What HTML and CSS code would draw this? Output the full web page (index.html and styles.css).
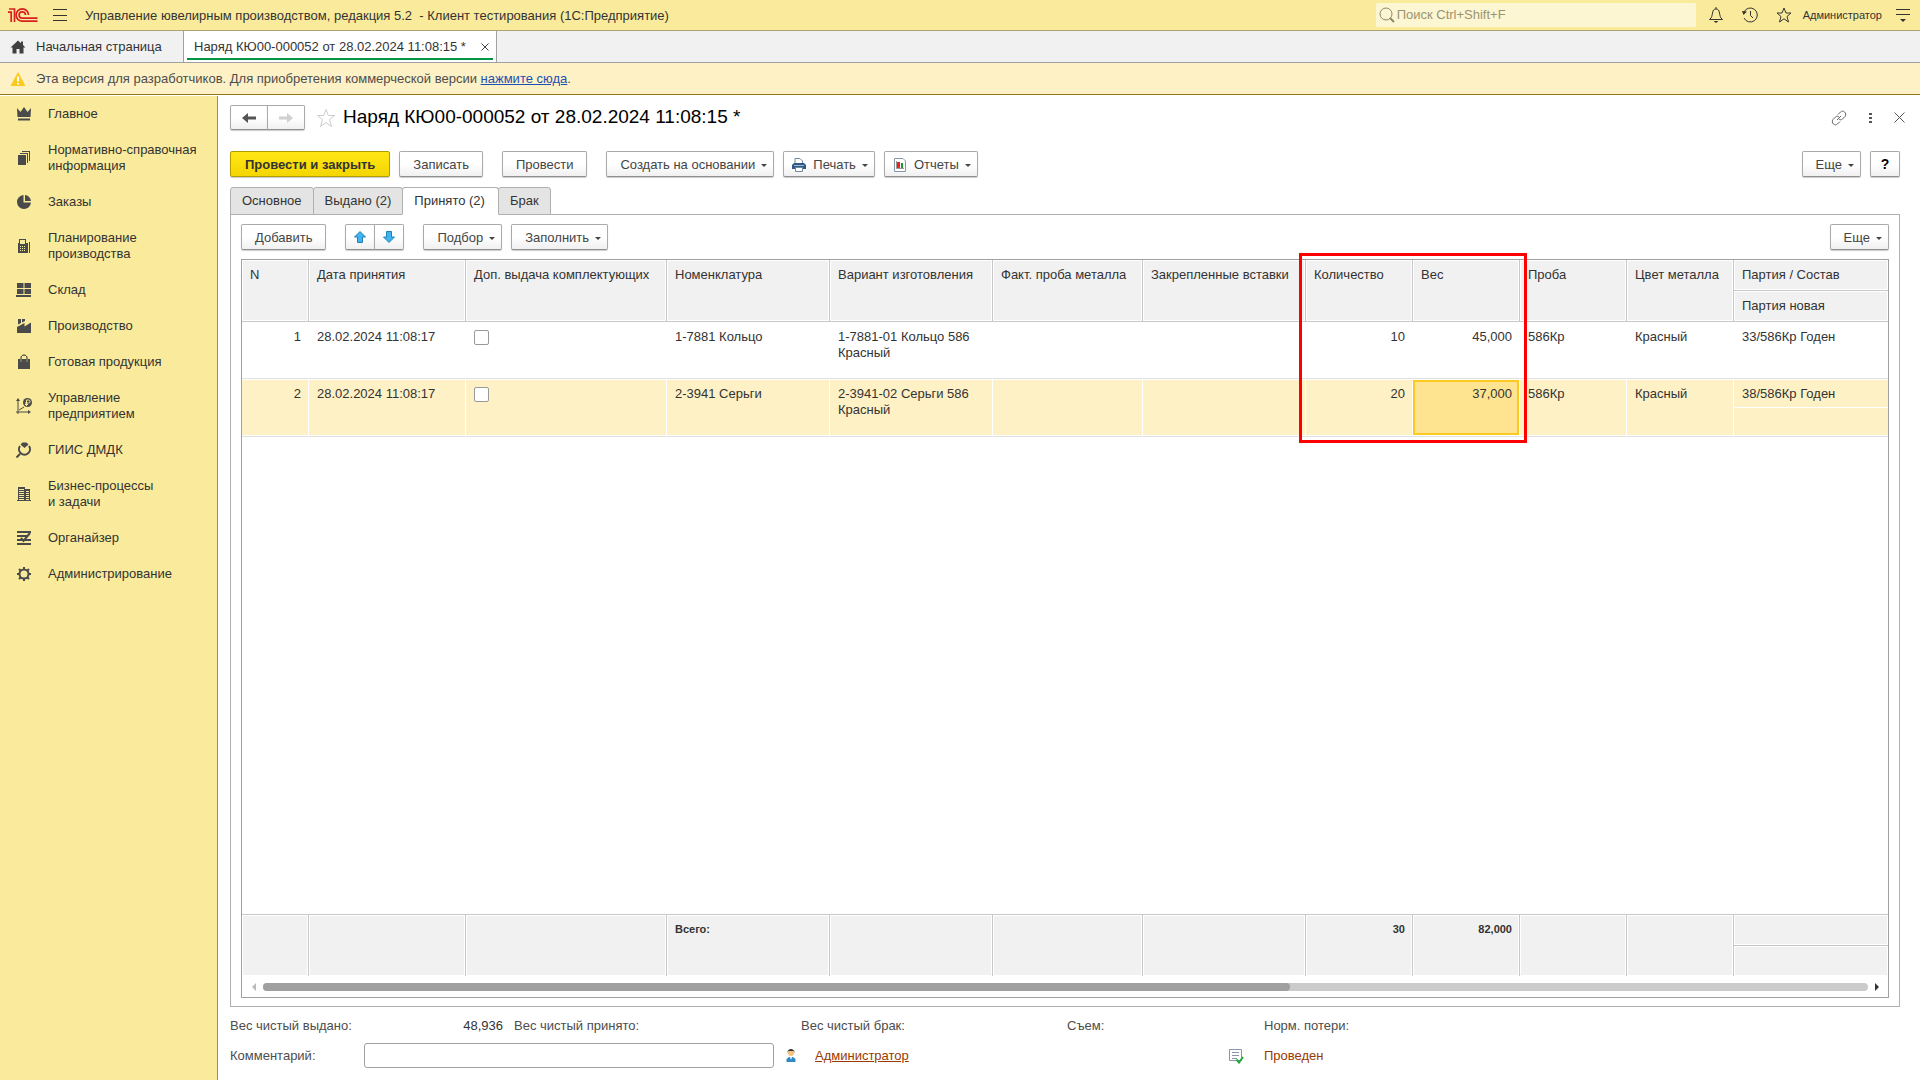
FILE: index.html
```html
<!DOCTYPE html>
<html lang="ru">
<head>
<meta charset="utf-8">
<title>Наряд КЮ00-000052 - Управление ювелирным производством</title>
<link rel="stylesheet" href="styles.css">
</head>
<body>
<header class="topbar">
  <svg class="logo" width="30" height="16" viewBox="0 0 30 16" fill="none" stroke="#d9201f" stroke-width="1.700"><path d="M0 5.200H3.200V15M1 2H6.500V15"/><path d="M20.500 8A6.200 6.200 0 1 0 14.300 14.200H29.500M17.500 8A3.200 3.200 0 1 0 14.300 11.200H29.500"/></svg>
  <button class="icon-btn menu-btn" aria-label="Меню"><svg width="14" height="14" viewBox="0 0 14 14" stroke="#333" stroke-width="1"><path d="M0 1.500H14M0 7.500H14M0 12.500H14"/></svg></button>
  <span class="app-title">Управление ювелирным производством, редакция 5.2 &nbsp;- Клиент тестирования&nbsp;(1С:Предприятие)</span>
  <label class="search">
    <svg width="16" height="16" viewBox="0 0 16 16" fill="none" stroke="#8f8868"><circle cx="7" cy="7" r="6"/><path d="M11 11L15 15" stroke-width="2"/></svg>
    <input type="text" placeholder="Поиск Ctrl+Shift+F" aria-label="Поиск">
  </label>
  <div class="top-icons">
    <button class="icon-btn" aria-label="Уведомления"><svg width="16" height="18" viewBox="0 0 16 18" fill="none" stroke="#333"><path d="M8 1V3M1.500 13.500H14.500C12 11.500 12 9.500 11.500 7C11 4 10 3 8 3S5 4 4.500 7C4 9.500 4 11.500 1.500 13.500Z"/><path d="M5.500 15H10.500L8 17Z" fill="#333" stroke="none"/></svg></button>
    <button class="icon-btn" aria-label="История"><svg width="16" height="16" viewBox="0 0 16 16" fill="none" stroke="#333"><path d="M2 5A7 7 0 1 1 2 11M8.500 4V8.500L11 11"/><path d="M0 4L5 4.500L1.500 8Z" fill="#333" stroke="none"/></svg></button>
    <button class="icon-btn" aria-label="Избранное"><svg width="16" height="16" viewBox="0 0 16 16" fill="none" stroke="#333"><path d="M8 1L10 6H15L11 9.500L12.500 15L8 11.800L3.500 15L5 9.500L1 6H6Z"/></svg></button>
    <span class="user">Администратор</span>
    <button class="icon-btn" aria-label="Настройки"><svg width="14" height="14" viewBox="0 0 14 14" stroke="#333"><path d="M0 1.500H14M0 6.500H14"/><path d="M4 11H10L7 14Z" fill="#333" stroke="none"/></svg></button>
  </div>
</header>

<nav class="windows">
  <a class="home" href="#"><svg width="16" height="14" viewBox="0 0 16 14" fill="#404040"><path d="M8 0.500L0.500 7.500H2.500V13.500H6.500V9H9.500V13.500H13.500V7.500H15.500L13 5V1.500H11V3.300Z"/></svg>Начальная страница</a>
  <div class="window-tab"><span>Наряд КЮ00-000052 от 28.02.2024 11:08:15 *</span><button class="icon-btn" aria-label="Закрыть вкладку"><svg width="8" height="8" viewBox="0 0 8 8" stroke="#444"><path d="M0.500 0.500L7.500 7.500M7.500 0.500L0.500 7.500"/></svg></button></div>
</nav>

<div class="notice">
  <svg width="16" height="14" viewBox="0 0 16 14"><path d="M8 0L15.500 14H0.500Z" fill="#fbca1e"/><path d="M8 4.500V9.500M8 11V12.500" stroke="#fff" stroke-width="2"/></svg>
  <p>Эта версия для разработчиков. Для приобретения коммерческой версии <a href="#">нажмите сюда</a>.</p>
</div>

<div class="workspace">
  <nav class="sidebar">
    <a href="#"><svg viewBox="0 0 16 16"><path d="M1 2L4.500 6L8 1L11.500 6L15 2L14.500 11H1.500ZM2 12.500H14V14.500H2Z"/></svg>Главное</a>
    <a href="#"><svg viewBox="0 0 16 16"><path d="M2 5H10V15H2ZM4 3H12V13H11V4H4ZM6 1H14V11H13V2H6Z"/></svg>Нормативно-справочная информация</a>
    <a href="#"><svg viewBox="0 0 16 16"><path d="M7.500 1A7 7 0 1 0 15 8.500L7.500 8.500ZM9 1A6.500 6.500 0 0 1 15 7H9Z"/></svg>Заказы</a>
    <a href="#"><svg viewBox="0 0 16 16"><path fill-rule="evenodd" d="M2 5H3V1H10V5H12V15H2ZM4 2V6H9V2ZM4 8V9H5V8ZM6 8V9H7V8ZM8 8V9H9V8ZM4 10V11H5V10ZM6 10V11H7V10ZM8 10V11H9V10ZM4 12V13H5V12ZM6 12V13H7V12ZM8 12V13H9V12ZM13 4H14V15H13Z"/></svg>Планирование производства</a>
    <a href="#"><svg viewBox="0 0 16 16"><path d="M1 1H7.500V6H1ZM8.500 1H15V6H8.500ZM1 7H7.500V12H1ZM8.500 7H15V12H8.500ZM0 13H15V15H0Z"/></svg>Склад</a>
    <a href="#"><svg viewBox="0 0 16 16"><path d="M2 1H5V5L2 6.500ZM6 1H9V3L6 4.500ZM1 9L8.500 5V8.500L15 4.500V15H1Z"/></svg>Производство</a>
    <a href="#"><svg viewBox="0 0 16 16"><path d="M2 5H14V15H2Z"/><path d="M5 8V4C5 0 11 0 11 4V8" fill="none" stroke="#a09a6c" stroke-width="1"/><path d="M5 5V4C5 0 11 0 11 4V5" fill="none" stroke="#4a4a4a"/></svg>Готовая продукция</a>
    <a href="#"><svg viewBox="0 0 16 16"><path d="M2 0L4 3H2.500V13.500H12V12L15 14L12 16V14.500H2.500V16H1.500V14.500H0V13.500H1.500V3H0Z"/><path d="M3 12L8 9" stroke="#4a4a4a"/><circle cx="11.500" cy="4.500" r="4.500"/><path d="M10.500 8V2H12.500A1.500 1.500 0 0 1 12.500 5H9M9 6.500H12" stroke="#faeb9c" fill="none"/></svg>Управление предприятием</a>
    <a href="#"><svg viewBox="0 0 16 16"><path d="M4.500 2.500L6.500 0.500H10.500L12.500 2.500L8.500 6Z"/><path d="M4 4A5.500 5.500 0 1 0 13 4M4 12L0.500 15.500" stroke="#4a4a4a" stroke-width="2" fill="none"/></svg>ГИИС ДМДК</a>
    <a href="#"><svg viewBox="0 0 16 16"><path fill-rule="evenodd" d="M2 1H9V3H14V14H15V15H1V14H2ZM3 3V4H8V3ZM3 5V6H8V5ZM3 7V8H8V7ZM3 9V10H8V9ZM3 11V12H8V11ZM3 13V14H8V13ZM10 5V6H13V5ZM10 7V8H13V7ZM10 9V10H13V9ZM10 11V12H13V11ZM10 13V14H13V13Z"/></svg>Бизнес-процессы<br>и задачи</a>
    <a href="#"><svg viewBox="0 0 16 16"><path d="M1 1H15V3H1ZM1 5H11V7H1ZM1 9H15V11H1ZM1 13H15V15H1Z"/><path d="M5 8L7.500 11L14 3" stroke="#4a4a4a" stroke-width="2" fill="none"/></svg>Органайзер</a>
    <a href="#"><svg viewBox="0 0 16 16"><circle cx="8" cy="8" r="4.500" fill="none" stroke="#4a4a4a" stroke-width="2"/><path d="M8 1V4M8 12V15M1 8H4M12 8H15M3 3L5 5M11 11L13 13M3 13L5 11M11 5L13 3" stroke="#4a4a4a" stroke-width="2"/></svg>Администрирование</a>
  </nav>

  <main class="form">
    <div class="form-head">
      <div class="btn-pair nav-pair">
        <button class="btn" aria-label="Назад"><svg width="14" height="10" viewBox="0 0 14 10" fill="#555"><path d="M0 5L6 0V3.500H14V6.500H6V10Z"/></svg></button>
        <button class="btn" aria-label="Вперед" disabled><svg width="14" height="10" viewBox="0 0 14 10" fill="#d0d0d0"><path d="M14 5L8 0V3.500H0V6.500H8V10Z"/></svg></button>
      </div>
      <button class="icon-btn fav" aria-label="В избранное"><svg width="20" height="20" viewBox="0 0 20 20" fill="none" stroke="#ccc"><path d="M10 1.500L12.300 7.500H18.500L13.500 11.500L15.500 18.500L10 14.500L4.500 18.500L6.500 11.500L1.500 7.500H7.700Z"/></svg></button>
      <h1>Наряд КЮ00-000052 от 28.02.2024 11:08:15 *</h1>
      <div class="head-tools">
        <button class="icon-btn" aria-label="Ссылка"><svg width="16" height="16" viewBox="0 0 16 16" fill="none" stroke="#666"><path d="M7 4.500L9.500 2C12 -0.500 16.500 3 14 6.500L11.500 9C10.500 10 9 10 8 9M9 11.500L6.500 14C4 16.500 -0.500 13 2 9.500L4.500 7C5.500 6 7 6 8 7M6 10L10 6"/></svg></button>
        <button class="icon-btn" aria-label="Еще действия"><svg width="3" height="12" viewBox="0 0 3 12" fill="#555"><path d="M0 1H3V3H0ZM0 5H3V7H0ZM0 9H3V11H0Z"/></svg></button>
        <button class="icon-btn" aria-label="Закрыть"><svg width="11" height="11" viewBox="0 0 11 11" stroke="#555"><path d="M0.500 0.500L10.500 10.500M10.500 0.500L0.500 10.500"/></svg></button>
      </div>
    </div>

    <div class="commands">
      <button class="btn primary">Провести и закрыть</button>
      <button class="btn">Записать</button>
      <button class="btn gap-left">Провести</button>
      <button class="btn gap-left drop">Создать на основании</button>
      <button class="btn drop with-icon"><svg width="16" height="16" viewBox="0 0 16 16"><path d="M4 7V1.500H9L11.500 4V7" fill="#fff" stroke="#71879b"/><path d="M1 8L3 6H13L15 8V12H1Z" fill="#2d5a88"/><path d="M3 8.500H13" stroke="#9db8d0"/><path d="M4.500 10.500H11.500V14.500H4.500Z" fill="#fff" stroke="#71879b"/></svg>Печать</button>
      <button class="btn drop with-icon"><svg width="16" height="16" viewBox="0 0 16 16"><path d="M2.500 1.500H11L13.500 4V14.500H2.500Z" fill="#fff" stroke="#8797a5"/><path d="M4.500 4V11.500H12" stroke="#999" fill="none"/><path d="M5 5H8V11H5Z" fill="#e22"/><path d="M9 6H11V11H9Z" fill="#1b9a2c"/></svg>Отчеты</button>
      <button class="btn drop push">Еще</button>
      <button class="btn help">?</button>
    </div>

    <div class="tabs" role="tablist">
      <button role="tab">Основное</button><button role="tab">Выдано (2)</button><button role="tab" class="active" aria-selected="true">Принято (2)</button><button role="tab">Брак</button>
    </div>

    <section class="panel">
      <div class="commands inner">
        <button class="btn">Добавить</button>
        <div class="btn-pair gap-left">
          <button class="btn" aria-label="Вверх"><svg width="12" height="12" viewBox="0 0 12 12"><path d="M6 0.500L11.500 6H8.500V11.500H3.500V6H0.500Z" fill="#3fb4ee" stroke="#2380b5"/></svg></button>
          <button class="btn" aria-label="Вниз"><svg width="12" height="12" viewBox="0 0 12 12"><path d="M6 11.500L11.500 6H8.500V0.500H3.500V6H0.500Z" fill="#3fb4ee" stroke="#2380b5"/></svg></button>
        </div>
        <button class="btn gap-left drop">Подбор</button>
        <button class="btn drop">Заполнить</button>
        <button class="btn drop push">Еще</button>
      </div>

      <div class="grid-box">
        <div class="grid-area">
        <table>
          <colgroup><col class="c67"><col class="c157"><col class="c201"><col class="c163"><col class="c163"><col class="c150"><col class="c163"><col class="c107"><col class="c107"><col class="c107"><col class="c107"><col></colgroup>
          <thead>
            <tr><th rowspan="2">N</th><th rowspan="2">Дата принятия</th><th rowspan="2">Доп. выдача комплектующих</th><th rowspan="2">Номенклатура</th><th rowspan="2">Вариант изготовления</th><th rowspan="2">Факт. проба металла</th><th rowspan="2">Закрепленные вставки</th><th rowspan="2">Количество</th><th rowspan="2">Вес</th><th rowspan="2">Проба</th><th rowspan="2">Цвет металла</th><th>Партия / Состав</th></tr>
            <tr><th>Партия новая</th></tr>
          </thead>
          <tbody>
            <tr class="row"><td class="num">1</td><td>28.02.2024 11:08:17</td><td><input type="checkbox" aria-label="Доп. выдача, строка 1"></td><td>1-7881 Кольцо</td><td>1-7881-01 Кольцо 586 Красный</td><td></td><td></td><td class="num">10</td><td class="num">45,000</td><td>586Кр</td><td>Красный</td><td>33/586Кр Годен</td></tr>
            <tr class="row current"><td class="num">2</td><td>28.02.2024 11:08:17</td><td><input type="checkbox" aria-label="Доп. выдача, строка 2"></td><td>2-3941 Серьги</td><td>2-3941-02 Серьги 586 Красный</td><td></td><td></td><td class="num">20</td><td class="num cell">37,000</td><td>586Кр</td><td>Красный</td><td class="split">38/586Кр Годен</td></tr>
            <tr class="filler"><td colspan="12"></td></tr>
          </tbody>
          <tfoot>
            <tr><td rowspan="2"></td><td rowspan="2"></td><td rowspan="2"></td><td rowspan="2">Всего:</td><td rowspan="2"></td><td rowspan="2"></td><td rowspan="2"></td><td rowspan="2" class="num">30</td><td rowspan="2" class="num">82,000</td><td rowspan="2"></td><td rowspan="2"></td><td></td></tr>
            <tr><td></td></tr>
          </tfoot>
        </table>
        </div>
        <div class="scroll">
          <svg width="4" height="8" viewBox="0 0 4 8" fill="#bbb"><path d="M4 0V8L0 4Z"/></svg>
          <div class="track"><div class="thumb"></div></div>
          <svg width="4" height="8" viewBox="0 0 4 8" fill="#333"><path d="M0 0V8L4 4Z"/></svg>
        </div>
        <div class="highlight"></div>
      </div>
    </section>

    <footer class="summary">
      <div class="totals">
        <span>Вес чистый выдано:</span><span class="value">48,936</span><span>Вес чистый принято:</span><span>Вес чистый брак:</span><span>Съем:</span><span>Норм. потери:</span>
      </div>
      <div class="comment">
        <label for="comment">Комментарий:</label>
        <input id="comment" type="text">
        <svg width="12" height="16" viewBox="0 0 12 16"><circle cx="6" cy="5" r="3" fill="#f3c37c"/><path d="M2.500 5C2 -0.500 10 -0.500 9.500 5L8.500 3H3.500Z" fill="#333"/><path d="M1.500 14V11L4 9H8L10.500 11V14Z" fill="#2f89c5"/><path d="M5 9H7L6 12Z" fill="#fff"/></svg>
        <a href="#">Администратор</a>
        <span class="status"><svg width="16" height="16" viewBox="0 0 16 16"><path d="M1.500 1.500H13.500V12.500H1.500Z" fill="#fff" stroke="#8a94a8"/><path d="M4 4.500H11M4 7.500H11M4 10.500H9" stroke="#8a94a8"/><path d="M8.500 11.500L11 14.500L15 9" stroke="#21a838" stroke-width="2" fill="none"/></svg>Проведен</span>
      </div>
    </footer>
  </main>
</div>
</body>
</html>
```
FILE: styles.css
```css
* { box-sizing: border-box; }

body {
  margin: 0;
  height: 100vh;
  display: flex;
  flex-direction: column;
  background: #fff;
  color: #333;
  font: 13px/16px "Liberation Sans", Arial, sans-serif;
}

button, input { font: inherit; color: inherit; }
svg { display: block; flex: none; }
p, h1 { margin: 0; }

.icon-btn {
  display: flex;
  padding: 0;
  border: 0;
  background: none;
}

/* Application bar */
.topbar {
  display: flex;
  align-items: center;
  height: 31px;
  flex: none;
  padding: 0 10px 0 8px;
  border-bottom: 1px solid #aaa272;
  background: #faeb9c;
}
.menu-btn { margin: 0 18px 0 15px; }
.app-title { flex: 1; padding-top: 1px; white-space: nowrap; }
.search {
  display: flex;
  align-items: center;
  gap: 2px;
  width: 320px;
  height: 24px;
  padding-left: 3px;
  border-radius: 2px;
  background: #fdf6d3;
}
.search input {
  flex: 1;
  padding: 0;
  border: 0;
  background: none;
  outline: 0;
}
.search input::placeholder { color: #9a946f; opacity: 1; }
.top-icons {
  display: flex;
  align-items: center;
  gap: 18px;
  margin-left: 12px;
}
.user { margin: 0 -4px 0 -7px; font-size: 11px; }

/* Open windows */
.windows {
  display: flex;
  height: 32px;
  flex: none;
  border-bottom: 1px solid #a0a0a0;
  background: #f1f1f1;
}
.home {
  display: flex;
  align-items: center;
  gap: 10px;
  width: 183px;
  padding-left: 10px;
  color: inherit;
  text-decoration: none;
}
.window-tab {
  display: flex;
  align-items: center;
  justify-content: space-between;
  width: 314px;
  padding: 0 7px 0 10px;
  border: solid #a0a0a0;
  border-width: 0 1px;
  background: linear-gradient(#009646, #009646) 50% 27px / 306px 2px no-repeat #fff;
}

.notice {
  display: flex;
  align-items: center;
  gap: 10px;
  height: 32px;
  flex: none;
  padding-left: 10px;
  border-bottom: 1px solid #93781a;
  background: #fef1c5;
  color: #4d4d4d;
}
.notice a { color: #1c50b4; }

.workspace {
  display: flex;
  flex: 1;
  min-height: 0;
  padding-top: 1px;
}

/* Sections */
.sidebar {
  display: flex;
  flex-direction: column;
  gap: 20px;
  width: 218px;
  flex: none;
  padding: 10px 8px 0 16px;
  border-right: 1px solid #958f68;
  background: #faeb9c;
}
.sidebar a {
  display: flex;
  align-items: center;
  gap: 16px;
  color: inherit;
  text-decoration: none;
}
.sidebar svg { width: 16px; height: 16px; fill: #4a4a4a; }

/* Document form */
.form {
  display: flex;
  flex-direction: column;
  flex: 1;
  min-width: 0;
  padding: 9px 20px 12px 12px;
}
.form-head {
  display: flex;
  align-items: center;
  height: 25px;
}
.form-head h1 {
  flex: 1;
  color: #000;
  font-size: 19px;
  font-weight: 400;
  line-height: 22px;
  padding-bottom: 2px;
}
.fav { margin: 0 7px 0 11px; }
.head-tools { display: flex; align-items: center; gap: 22px; margin-right: -5px; }

.btn {
  display: flex;
  align-items: center;
  justify-content: center;
  height: 26px;
  padding: 1px 13px 0;
  border: 1px solid #aaa;
  border-bottom-color: #8f8f8f;
  border-radius: 2px;
  background: linear-gradient(#fff 50%, #f0f0f0);
  box-shadow: 0 1px 1px #ccc;
  color: #444;
  white-space: nowrap;
}
.btn.primary {
  padding: 1px 14px 0;
  border-color: #b29c00;
  background: linear-gradient(#ffe716, #f4d600);
  color: #333;
  font-weight: 700;
}
.btn.drop { padding-right: 6px; }
.btn.drop::after {
  content: "";
  margin: 2px 0 0 6px;
  border: 3px solid transparent;
  border-top-color: #444;
  border-bottom: 0;
}
.btn.with-icon { padding-left: 7px; }
.btn.with-icon svg { margin-right: 6px; }
.btn.help { width: 30px; padding: 0; color: #000; font-size: 14px; font-weight: 700; }

.btn-pair { display: flex; }
.btn-pair .btn { width: 30px; padding: 0; }
.btn-pair .btn:first-child { border-radius: 2px 0 0 2px; }
.btn-pair .btn:last-child { margin-left: -1px; border-radius: 0 2px 2px 0; }
.btn-pair.nav-pair .btn { width: 38px; height: 25px; }

.commands {
  display: flex;
  gap: 9px;
  margin-top: 21px;
}
.commands .gap-left { margin-left: 10px; }
.commands .push { margin-left: auto; }
.commands.inner { margin: 0 0 9px; }

.tabs { display: flex; margin-top: 10px; }
.tabs button {
  height: 28px;
  margin: 0 0 -1px -1px;
  padding: 0 11px;
  border: 1px solid #b0b0b0;
  border-radius: 3px 3px 0 0;
  background: #e4e4e4;
}
.tabs button:first-child { margin-left: 0; }
.tabs .active {
  z-index: 1;
  padding: 0 13px 0 11px;
  border-bottom-color: #fff;
  background: #fff;
}

.panel {
  display: flex;
  flex-direction: column;
  flex: 1;
  min-height: 0;
  padding: 9px 10px 8px;
  border: 1px solid #b0b0b0;
}

/* Table of accepted items */
.grid-box {
  position: relative;
  display: flex;
  flex-direction: column;
  flex: 1;
  min-height: 0;
  border: 1px solid #a0a0a0;
}
.grid-area { flex: 1; min-height: 0; }
table {
  width: 100%;
  height: 100%;
  border-spacing: 0;
  table-layout: fixed;
}
.c67 { width: 67px; }
.c107 { width: 107px; }
.c150 { width: 150px; }
.c157 { width: 157px; }
.c163 { width: 163px; }
.c201 { width: 201px; }
th, td {
  padding: 7px 7px 0 8px;
  text-align: left;
  vertical-align: top;
  font-weight: 400;
}
th { white-space: nowrap; }
thead tr, tfoot tr { height: 31px; }
th, tfoot td {
  border-right: 1px solid #c8c8c8;
  border-bottom: 1px solid #c8c8c8;
  background: #f1f1f1;
  box-shadow: inset 0 0 0 1px #fff;
}
tr > :last-child:not([rowspan]) { border-right: 0; }
.row { height: 57px; }
.row td {
  border-right: 1px solid #fff;
  border-bottom: 1px solid #e0e0e0;
}
.current { height: 58px; }
.current td {
  padding-top: 6px;
  border-top: 1px solid #fff;
  background: #fef1c5;
  box-shadow: inset 0 -1px #fff;
}
.current .cell {
  background: #fee491;
  box-shadow: inset 0 -1px #fff, inset 0 -3px #fbc91f, inset 0 0 0 2px #fbc91f;
}
.current .split {
  background: linear-gradient(#fff, #fff) 0 27px / 100% 1px no-repeat #fef1c5;
}
td.num { text-align: right; }
.filler td { padding: 0; }
tfoot td {
  padding-top: 6px;
  border-top: 1px solid #c8c8c8;
  border-bottom: 0;
  font-size: 11px;
  font-weight: 700;
}
td input[type="checkbox"] {
  appearance: none;
  display: block;
  width: 15px;
  height: 15px;
  margin: 1px 0 0;
  border: 1px solid #999;
  border-radius: 2px;
  background: #fff;
}

.scroll {
  display: flex;
  align-items: center;
  gap: 7px;
  height: 21px;
  flex: none;
  padding: 0 9px 0 10px;
}
.track {
  flex: 1;
  height: 8px;
  border-radius: 4px;
  background: #cbcbcb;
}
.thumb {
  width: 64%;
  height: 8px;
  border-radius: 4px;
  background: #a0a0a0;
}
.highlight {
  position: absolute;
  top: -7px;
  left: 1057px;
  width: 228px;
  height: 190px;
  border: 3px solid #f00;
  pointer-events: none;
}

/* Totals and comment */
.summary { color: #4d4d4d; }
.totals {
  display: grid;
  grid-template-columns: 134px 139px 11px 287px 266px 197px 1fr;
  padding-top: 11px;
}
.totals .value { color: #333; text-align: right; }
.totals .value + span { grid-column: 4; }
.comment {
  display: grid;
  grid-template-columns: 134px 410px 12px 397px 1fr;
  align-items: center;
  margin-top: 9px;
}
.comment input {
  height: 25px;
  border: 1px solid #a0a0a0;
  border-radius: 3px;
}
.comment svg { margin-left: 11px; }
.comment a { margin-left: 29px; color: #9a3a00; }
.status {
  display: flex;
  align-items: center;
  gap: 20px;
  color: #9a3a00;
}
.status svg { margin-left: 45px; }
```
